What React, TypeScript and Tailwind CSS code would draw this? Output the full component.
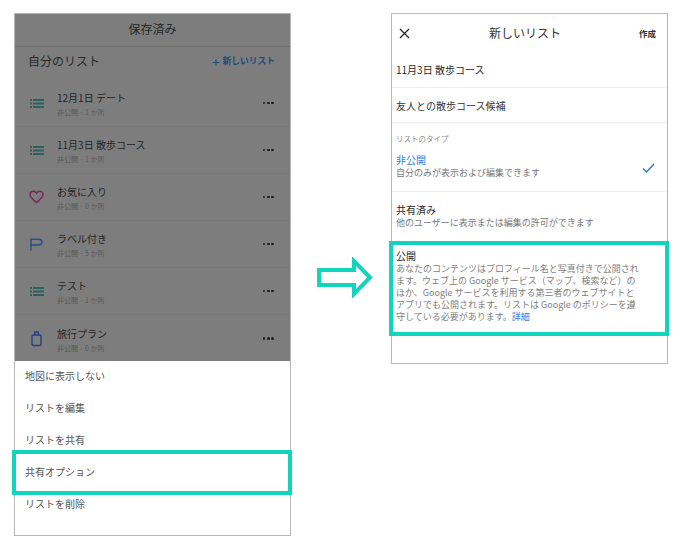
const font = '[font-family:"Noto_Sans_CJK_JP","Liberation_Sans",sans-serif]';

const ListIcon = () => (
  <svg width="14" height="9" viewBox="0 0 14 9" fill="#2f5f5c">
    <rect x="0" y="0" width="2" height="2" />
    <rect x="0" y="3.5" width="2" height="2" />
    <rect x="0" y="7" width="2" height="2" />
    <rect x="3" y="0" width="11" height="2" />
    <rect x="3" y="3.5" width="11" height="2" />
    <rect x="3" y="7" width="11" height="2" />
  </svg>
);

const HeartIcon = () => (
  <svg width="15" height="14" viewBox="0 0 15 14" fill="none" stroke="#7f2458" strokeWidth="1.5">
    <path d="M7.5 12.6 C3 9 1 7 1 4.6 C1 2.6 2.6 1.2 4.3 1.2 C5.6 1.2 6.8 1.9 7.5 3.2 C8.2 1.9 9.4 1.2 10.7 1.2 C12.4 1.2 14 2.6 14 4.6 C14 7 12 9 7.5 12.6 Z" />
  </svg>
);

const FlagIcon = () => (
  <svg width="13" height="13" viewBox="0 0 13 13" fill="none" stroke="#264f8e" strokeWidth="1.5">
    <path d="M1 12.5 V1.2 H8.5 C10.6 1.2 12 2.4 12 4 C12 5.7 10.6 6.9 8.5 6.9 H1" />
  </svg>
);

const BagIcon = () => (
  <svg width="11" height="16" viewBox="0 0 11 16" fill="none" stroke="#24408a" strokeWidth="1.4">
    <rect x="1" y="4" width="9" height="10.5" rx="1.5" />
    <path d="M3.8 4 V1 H7.2 V4" />
  </svg>
);

const lists = [
  { title: '12月1日 デート', sub: '非公開 · 1 か所', icon: <ListIcon /> },
  { title: '11月3日 散歩コース', sub: '非公開 · 1 か所', icon: <ListIcon /> },
  { title: 'お気に入り', sub: '非公開 · 0 か所', icon: <HeartIcon /> },
  { title: 'ラベル付き', sub: '非公開 · 5 か所', icon: <FlagIcon /> },
  { title: 'テスト', sub: '非公開 · 1 か所', icon: <ListIcon /> },
  { title: '旅行プラン', sub: '非公開 · 0 か所', icon: <BagIcon /> },
];

const menu = ['地図に表示しない', 'リストを編集', 'リストを共有', '共有オプション', 'リストを削除'];

const Dots = () => (
  <div className="flex gap-[1.5px]">
    <span className="size-[2.8px] rounded-full bg-[#1c1c1c]" />
    <span className="size-[2.8px] rounded-full bg-[#1c1c1c]" />
    <span className="size-[2.8px] rounded-full bg-[#1c1c1c]" />
  </div>
);

const SavedScreen = () => (
  <div className="relative flex h-[523px] w-[277px] shrink-0 flex-col border border-[#b8b8b8] bg-white">
    <div className="flex h-[347px] flex-col bg-[#7d7d7d]">
      <div className="flex h-[33px] shrink-0 items-center justify-center border-b border-[#6f6f6f] pb-[2px] text-[12px] text-[#262626]">
        保存済み
      </div>
      <div className="flex h-[33px] shrink-0 items-center justify-between pr-[15px] pb-[5px] pl-[13px]">
        <span className="text-[12px] text-[#2a2a2a]">自分のリスト</span>
        <span className="flex items-center text-[8.75px] font-bold text-[#1f4a80]">
          <span className="mr-[3px] text-[13px] leading-none font-normal">+</span>新しいリスト
        </span>
      </div>
      {lists.map((item, i) => (
        <div key={i} className="flex h-[47px] shrink-0 items-center border-b border-[#777777] pr-[16px] last:border-b-0">
          <div className="flex w-[42px] shrink-0 justify-center pl-[1px]">{item.icon}</div>
          <div className="flex grow flex-col pt-[4px]">
            <span className="text-[10px] leading-[15px] text-[#242424]">{item.title}</span>
            <span className="text-[7px] leading-[15px] text-[#5a5a5a]">{item.sub}</span>
          </div>
          <Dots />
        </div>
      ))}
    </div>
    <div className="flex flex-col">
      {menu.map((label) => (
        <div key={label} className="flex h-[32px] items-center pb-[3px] pl-[10px] text-[10px] text-[#555555]">
          {label}
        </div>
      ))}
    </div>
    {/* highlight over 共有オプション */}
    <div className="absolute top-[436px] -left-[3px] h-[45px] w-[280px] border-4 border-[#12d4bc]" />
  </div>
);

const NewListScreen = () => (
  <div className="relative flex h-[351px] w-[277px] shrink-0 flex-col border border-[#b8b8b8] bg-white">
    <div className="flex h-[38px] shrink-0 items-center justify-between pr-[11px] pl-[7px]">
      <svg width="11" height="11" viewBox="0 0 11 11" stroke="#2a2a2a" strokeWidth="1.4">
        <path d="M1 1 L10 10 M10 1 L1 10" />
      </svg>
      <span className="ml-[1px] text-[12px] text-[#333333]">新しいリスト</span>
      <span className="text-[8.5px] font-bold text-[#333333]">作成</span>
    </div>
    <div className="flex h-[36px] shrink-0 items-center border-b border-[#eeeeee] pl-[4px] text-[10px] text-[#1f1f1f]">
      11月3日 散歩コース
    </div>
    <div className="flex h-[35px] shrink-0 items-center border-b border-[#eeeeee] pl-[4px] text-[10px] text-[#333333]">
      友人との散歩コース候補
    </div>
    <div className="flex h-[69px] shrink-0 flex-col border-b border-[#eeeeee] pr-[12px] pl-[4px]">
      <span className="mt-[10px] text-[7.5px] leading-[11px] text-[#8a8a8a]">リストのタイプ</span>
      <div className="mt-[9px] flex items-center justify-between">
        <div className="flex flex-col">
          <span className="text-[10px] leading-[14px] text-[#2f7de1]">非公開</span>
          <span className="text-[9px] leading-[12px] text-[#777777]">自分のみが表示および編集できます</span>
        </div>
        <svg className="mt-[3px]" width="13" height="10" viewBox="0 0 13 10" fill="none" stroke="#2a6fc4" strokeWidth="1.3">
          <path d="M1 5.5 L4.5 9 L12 1" />
        </svg>
      </div>
    </div>
    <div className="flex shrink-0 flex-col pt-[11px] pl-[4px]">
      <span className="text-[10px] leading-[14px] text-[#1f1f1f]">共有済み</span>
      <span className="text-[9px] leading-[12px] text-[#777777]">他のユーザーに表示または編集の許可ができます</span>
    </div>
    <div className="flex flex-col pt-[20px] pl-[4px]">
      <span className="text-[10px] leading-[14px] text-[#1f1f1f]">公開</span>
      <p className="text-[9px] leading-[11.9px] text-[#808080]">
        あなたのコンテンツはプロフィール名と写真付きで公開され
        <br />
        ます。ウェブ上の Google サービス（マップ、検索など）の
        <br />
        ほか、Google サービスを利用する第三者のウェブサイトと
        <br />
        アプリでも公開されます。リストは Google のポリシーを遵
        <br />
        守している必要があります。<span className="text-[#2f7de1]">詳細</span>
      </p>
    </div>
    {/* highlight over 公開 */}
    <div className="absolute top-[227px] -left-[3px] h-[95px] w-[280px] border-4 border-[#12d4bc]" />
  </div>
);

export default function App() {
  return (
    <div className={`flex h-[544px] w-[682px] items-start bg-white pt-[13px] pl-[14px] ${font}`}>
      <SavedScreen />
      <svg className="mt-[244px] ml-[26px] shrink-0" width="56" height="41" viewBox="0 0 56 41" fill="none" stroke="#12d4bc" strokeWidth="4">
        <path d="M2 13 H37 V4 L53 20.5 L37 37 V28 H2 Z" />
      </svg>
      <div className="ml-[18px]">
        <NewListScreen />
      </div>
    </div>
  );
}
